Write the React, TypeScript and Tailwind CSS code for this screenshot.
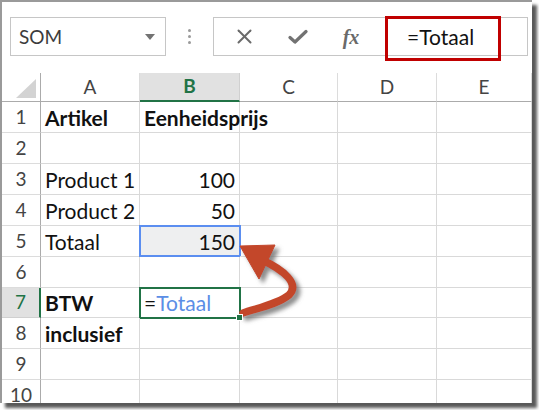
import React from 'react';

const FONT = { fontFamily: 'Lato, "Open Sans", sans-serif' };

const cols = ['A', 'B', 'C', 'D', 'E'];

type Cell = { text?: string; bold?: boolean; right?: boolean };

const rows: { h: string; cells: Cell[] }[] = [
  { h: 'h-[31px]', cells: [{ text: 'Artikel', bold: true }, { text: 'Eenheidsprijs', bold: true }] },
  { h: 'h-[31px]', cells: [] },
  { h: 'h-[31px]', cells: [{ text: 'Product 1' }, { text: '100', right: true }] },
  { h: 'h-[31px]', cells: [{ text: 'Product 2' }, { text: '50', right: true }] },
  { h: 'h-[31px]', cells: [{ text: 'Totaal' }, { text: '150', right: true }] },
  { h: 'h-[31px]', cells: [] },
  { h: 'h-[30px]', cells: [{ text: 'BTW', bold: true }] },
  { h: 'h-[31px]', cells: [{ text: 'inclusief', bold: true }] },
  { h: 'h-[31px]', cells: [] },
  { h: 'h-[31px]', cells: [] },
];

function FormulaBar() {
  return (
    <div className="relative h-[71px] shrink-0 flex items-start pt-[15px] pl-[8px]">
      {/* name box */}
      <div className="w-[156px] h-[39px] border border-[#c6c6c6] bg-white flex items-center justify-between pl-[8px] pr-[10px]">
        <span className="text-[19px] text-[#3c3c3c] leading-none">SOM</span>
        <svg width="10" height="6" viewBox="0 0 10 6">
          <polygon points="0,0 10,0 5,6" fill="#737373" />
        </svg>
      </div>
      {/* grip dots */}
      <div className="w-[47px] h-[39px] flex flex-col items-center justify-center gap-[3px]">
        <span className="w-[3px] h-[3px] rounded-full bg-[#9a9a9a]" />
        <span className="w-[3px] h-[3px] rounded-full bg-[#9a9a9a]" />
        <span className="w-[3px] h-[3px] rounded-full bg-[#9a9a9a]" />
      </div>
      {/* formula box */}
      <div className="w-[315px] h-[39px] border border-[#c6c6c6] bg-white flex items-center">
        <div className="w-[60px] flex justify-center">
          <svg width="15" height="15" viewBox="0 0 15 15" stroke="#6a6a6a" strokeWidth="2" strokeLinecap="round">
            <line x1="1.5" y1="1.5" x2="13.5" y2="13.5" />
            <line x1="13.5" y1="1.5" x2="1.5" y2="13.5" />
          </svg>
        </div>
        <div className="w-[48px] flex justify-center">
          <svg width="20" height="16" viewBox="0 0 20 16" fill="none" stroke="#727272" strokeWidth="3.2" strokeLinecap="round" strokeLinejoin="round">
            <polyline points="2,8.5 7,13 18,2.5" />
          </svg>
        </div>
        <div className="w-[58px] flex justify-center">
          <span className="text-[20px] italic font-bold text-[#6a6a6a] leading-none" style={{ fontFamily: '"Liberation Serif", serif' }}>
            fx
          </span>
        </div>
        <span className="ml-[27px] text-[21px] text-[#111] leading-none">=Totaal</span>
      </div>
      {/* red annotation frame */}
      <div className="absolute left-[383px] top-[14px] w-[116px] h-[45px] border-[3px] border-[#c00000]" />
    </div>
  );
}

function Grid() {
  return (
    <div className="grid grid-cols-[39px_99px_100px_98px_99px_1fr] flex-1 overflow-hidden">
      {/* header row */}
      <div className="h-[29px] border-r border-b border-[#ababab] flex items-end justify-end pr-[4px] pb-[3px]">
        <svg width="20" height="19" viewBox="0 0 20 19">
          <polygon points="0,19 20,19 20,0" fill="#d3d3d3" />
        </svg>
      </div>
      {cols.map((c) =>
        c === 'B' ? (
          <div key={c} className="h-[29px] bg-[#e1e1e1] border-r border-[#d0d0d0] border-b-2 border-b-[#217346] flex items-center justify-center text-[19px] font-bold text-[#217346]">
            {c}
          </div>
        ) : (
          <div key={c} className="h-[29px] border-r border-[#dcdcdc] border-b border-b-[#ababab] flex items-center justify-center text-[19px] text-[#444]">
            {c}
          </div>
        )
      )}
      {rows.map((r, i) => {
        const n = i + 1;
        const active = n === 7;
        return (
          <React.Fragment key={n}>
            <div
              className={`${r.h} border-b flex items-center justify-center text-[19px] ${
                active
                  ? 'bg-[#e1e1e1] border-b-[#d0d0d0] border-r-2 border-r-[#217346] text-[#217346]'
                  : 'border-r border-r-[#ababab] border-b-[#dcdcdc] text-[#444]'
              }`}
            >
              {n}
            </div>
            {cols.map((c, ci) => {
              const cell = r.cells[ci];
              const isB5 = n === 5 && c === 'B';
              const isB7 = n === 7 && c === 'B';
              return (
                <div
                  key={c}
                  className={`${r.h} relative border-r border-b border-[#d9d9d9] flex items-center px-[4px] text-[21px] text-[#111] ${
                    isB5 ? 'bg-[#eeeff0]' : ''
                  } ${cell?.right ? 'justify-end' : ''}`}
                >
                  {cell?.text && (
                    <span className={`whitespace-nowrap leading-none ${cell.bold ? 'font-bold' : ''} ${ci === 1 && cell.bold ? 'relative z-10' : ''}`}>
                      {cell.text}
                    </span>
                  )}
                  {isB7 && (
                    <span className="whitespace-nowrap leading-none">
                      =<span className="text-[#5b8ee6]">Totaal</span>
                    </span>
                  )}
                  {isB5 && <div className="absolute -left-[1px] -top-[1px] w-[102px] h-[32px] border-2 border-[#5b8ef0]" />}
                  {isB7 && (
                    <>
                      <div className="absolute -left-[1px] -top-[1px] w-[102px] h-[32px] border-2 border-[#217346]" />
                      <div className="absolute -right-[4px] -bottom-[4px] w-[7px] h-[7px] bg-[#217346] border border-white z-10" />
                    </>
                  )}
                </div>
              );
            })}
          </React.Fragment>
        );
      })}
    </div>
  );
}

export default function App() {
  return (
    <div className="relative w-[539px] h-[410px] bg-white overflow-hidden" style={FONT}>
      <div className="w-[532px] h-[403px] bg-white border-l-2 border-t-2 border-[#9a9a9a] shadow-[5px_5px_3px_rgba(0,0,0,0.65)] flex flex-col overflow-hidden">
        <FormulaBar />
        <Grid />
      </div>
      {/* annotation arrow from B7 to B5 */}
      <svg className="absolute left-0 top-0 pointer-events-none" width="539" height="410" viewBox="0 0 539 410">
        <defs>
          <filter id="sh" x="-20%" y="-20%" width="150%" height="150%">
            <feDropShadow dx="4" dy="4" stdDeviation="2.2" floodColor="#6f6f6f" floodOpacity="0.8" />
          </filter>
        </defs>
        <g filter="url(#sh)" fill="#c3472c" stroke="#c3472c">
          <path d="M 262 260 C 284 270, 300 284, 289 295 C 278 304, 258 308, 243 313" fill="none" strokeWidth="7.5" strokeLinecap="round" />
          <polygon points="240,246 275,245 259,279" strokeWidth="1" strokeLinejoin="round" />
        </g>
      </svg>
    </div>
  );
}
